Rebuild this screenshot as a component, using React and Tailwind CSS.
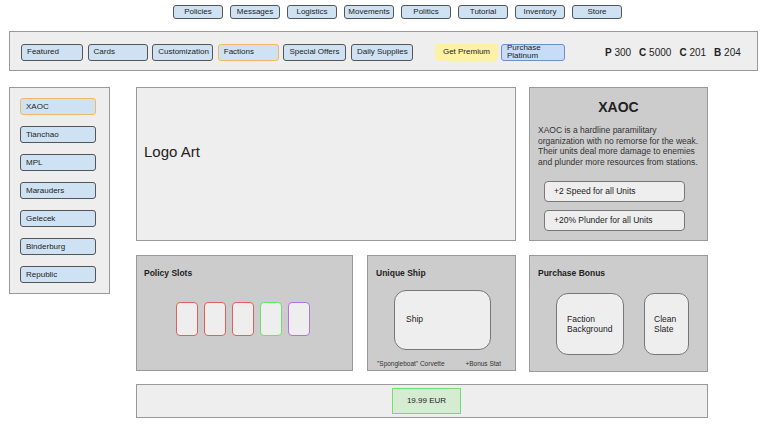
import React from 'react';

const navItems = ['Policies', 'Messages', 'Logistics', 'Movements', 'Politics', 'Tutorial', 'Inventory', 'Store'];
const tabs = [
    { label: 'Featured', w: 'w-[62px]' },
    { label: 'Cards', w: 'w-[60px]' },
    { label: 'Customization', w: 'w-[61px]' },
    { label: 'Factions', w: 'w-[61px]', active: true },
    { label: 'Special Offers', w: 'w-[63px]' },
    { label: 'Daily Supplies', w: 'w-[62px]' },
];
const factions = ['XAOC', 'Tianchao', 'MPL', 'Marauders', 'Gelecek', 'Binderburg', 'Republic'];
const slots = ['border-[#e06060]', 'border-[#e06060]', 'border-[#e06060]', 'border-[#6ee06e]', 'border-[#b070f0]'];

const App = () => {
    return (
        <div className="w-[768px] h-[432px] bg-white text-[#222] overflow-hidden" style={{ fontFamily: '"Liberation Sans", Arial, sans-serif' }}>
            {/* top nav */}
            <div className="flex gap-[7px] pl-[173px] pt-[5px]">
                {navItems.map((item) => (
                    <div key={item} className="w-[50px] h-[14px] flex items-center justify-center text-[8px] bg-[#cfe2f3] border border-[#555] rounded-[3px]">
                        {item}
                    </div>
                ))}
            </div>

            {/* shop tabs */}
            <div className="ml-[9px] mt-[12px] w-[749px] h-[40px] bg-[#eeeeee] border border-[#999] flex items-center pl-[11px] pt-[2px]">
                <div className="flex gap-[4.6px]">
                    {tabs.map((t) => (
                        <div key={t.label} className={`${t.w} h-[17px] flex items-center pl-[5px] text-[8px] rounded-[3px] bg-[#cfe2f3] border ${t.active ? 'border-[#f0b868]' : 'border-[#555]'}`}>
                            {t.label}
                        </div>
                    ))}
                </div>
                <div className="ml-[22px] w-[63px] h-[17px] flex items-center justify-center text-[8px] rounded-[4px] bg-[#fdf1a8]">
                    Get Premium
                </div>
                <div className="ml-[3px] w-[64px] h-[17px] flex flex-col justify-center pl-[5px] text-[8px] leading-[8px] rounded-[3px] bg-[#c8dcf8] border border-[#6c8fd0]">
                    <span>Purchase</span>
                    <span>Platinum</span>
                </div>
                <div className="ml-[40px] flex gap-[8px] text-[10px]">
                    <span><b>P</b> 300</span>
                    <span><b>C</b> 5000</span>
                    <span><b>C</b> 201</span>
                    <span><b>B</b> 204</span>
                </div>
            </div>

            {/* main */}
            <div className="flex mt-[16px] ml-[9px]">
                <div className="w-[101px] h-[207px] bg-[#eeeeee] border border-[#999] flex flex-col gap-[11px] pt-[10px] pl-[10px]">
                    {factions.map((f, i) => (
                        <div key={f} className={`w-[76px] h-[17px] flex items-center pl-[5px] text-[8px] rounded-[3px] bg-[#cfe2f3] border ${i === 0 ? 'border-[#f0b868]' : 'border-[#555]'}`}>
                            {f}
                        </div>
                    ))}
                </div>

                <div className="ml-[26px] w-[572px] flex flex-col">
                    <div className="flex gap-[13px]">
                        <div className="w-[380px] h-[154px] bg-[#eeeeee] border border-[#999] pl-[7px] pt-[53px] text-[15px]">
                            Logo Art
                        </div>
                        <div className="w-[179px] h-[154px] bg-[#cccccc] border border-[#999] flex flex-col">
                            <div className="text-center font-bold text-[14px] mt-[9px]">XAOC</div>
                            <p className="text-[8.5px] leading-[10.5px] px-[8px] mt-[7px] text-[#333]">
                                XAOC is a hardline paramilitary organization with no remorse for the weak. Their units deal more damage to enemies and plunder more resources from stations.
                            </p>
                            <div className="flex flex-col gap-[8px] ml-[14px] mt-[14px]">
                                <div className="w-[141px] h-[21px] flex items-center pl-[9px] text-[8.5px] bg-[#eeeeee] border border-[#777] rounded-[4px]">+2 Speed for all Units</div>
                                <div className="w-[141px] h-[21px] flex items-center pl-[9px] text-[8.5px] bg-[#eeeeee] border border-[#777] rounded-[4px]">+20% Plunder for all Units</div>
                            </div>
                        </div>
                    </div>

                    <div className="flex mt-[14px]">
                        <div className="w-[217px] h-[116px] bg-[#cccccc] border border-[#999] flex flex-col">
                            <div className="font-bold text-[8.5px] ml-[7px] mt-[11px]">Policy Slots</div>
                            <div className="flex gap-[6px] ml-[39px] mt-[22px]">
                                {slots.map((c, i) => (
                                    <div key={i} className={`w-[22px] h-[34px] bg-[#eeeeee] border ${c} rounded-[4px]`} />
                                ))}
                            </div>
                        </div>
                        <div className="ml-[14px] w-[149px] h-[116px] bg-[#cccccc] border border-[#999] flex flex-col">
                            <div className="font-bold text-[8.5px] ml-[8px] mt-[11px]">Unique Ship</div>
                            <div className="ml-[26px] mt-[10px] w-[97px] h-[60px] bg-[#eeeeee] border border-[#777] rounded-[12px] flex items-center pl-[11px] text-[8.5px]">
                                Ship
                            </div>
                            <div className="flex justify-between pl-[9px] pr-[14px] mt-[9px] text-[6.5px] text-[#333]">
                                <span>"Spongleboat" Corvette</span>
                                <span>+Bonus Stat</span>
                            </div>
                        </div>
                        <div className="ml-[13px] w-[179px] h-[117px] bg-[#cccccc] border border-[#999] flex flex-col">
                            <div className="font-bold text-[8.5px] ml-[8px] mt-[11px]">Purchase Bonus</div>
                            <div className="flex gap-[20px] ml-[26px] mt-[13px]">
                                <div className="w-[68px] h-[62px] bg-[#eeeeee] border border-[#777] rounded-[12px] flex items-center pl-[10px] text-[8.5px] leading-[10px]">
                                    Faction<br />Background
                                </div>
                                <div className="w-[45px] h-[62px] bg-[#eeeeee] border border-[#777] rounded-[10px] flex items-center pl-[9px] text-[8.5px] leading-[10px]">
                                    Clean<br />Slate
                                </div>
                            </div>
                        </div>
                    </div>

                    <div className="mt-[12px] w-[572px] h-[34px] bg-[#eeeeee] border border-[#999] flex items-center pl-[255px]">
                        <div className="w-[69px] h-[26px] bg-[#d6ecd2] border border-[#6ee06e] flex items-center justify-center text-[8px]">
                            19.99 EUR
                        </div>
                    </div>
                </div>
            </div>
        </div>
    );
};

export default App;
